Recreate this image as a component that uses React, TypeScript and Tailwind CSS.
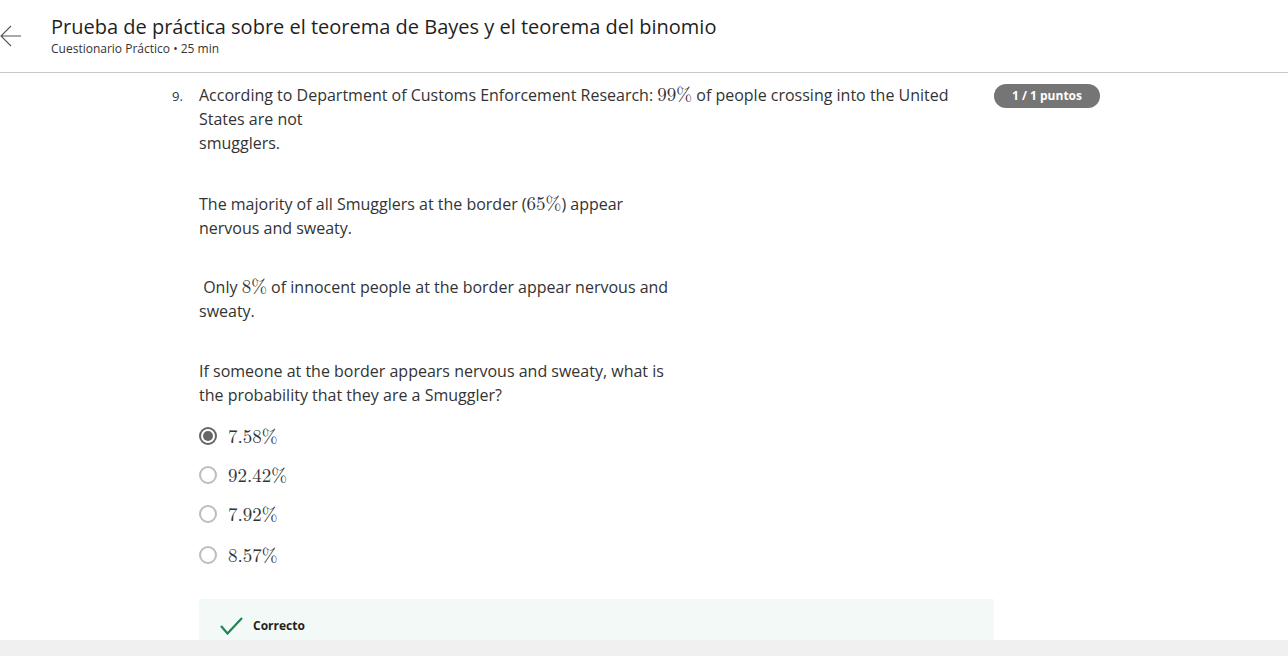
import React from 'react';

const sans = { fontFamily: '"Open Sans", "Noto Sans", Arial, sans-serif' };
const serif = { fontFamily: '"Latin Modern Roman", "Liberation Serif", "DejaVu Serif", serif' };

function M({ children }: { children: React.ReactNode }) {
  return (
    <span className="text-[19px] leading-[0]" style={serif}>
      {children}
    </span>
  );
}

function Radio({ checked, label }: { checked?: boolean; label: string }) {
  return (
    <div className="flex items-center h-[39px]">
      {checked ? (
        <span className="w-[18px] h-[18px] rounded-full border-2 border-[#666] flex items-center justify-center">
          <span className="w-[10px] h-[10px] rounded-full bg-[#666]" />
        </span>
      ) : (
        <span className="w-[18px] h-[18px] rounded-full border-2 border-[#bdbdbd]" />
      )}
      <span className="ml-[11px] text-[19px] leading-[24px] text-[#333]" style={serif}>
        {label}
      </span>
    </div>
  );
}

export default function App() {
  return (
    <div className="w-[1288px] h-[656px] bg-white overflow-hidden flex flex-col text-[#333]" style={sans}>
      <header className="h-[73px] shrink-0 border-b border-[#c8c8c8] flex">
        <div className="w-[51px] flex items-start pt-[24px]">
          <svg width="22" height="24" viewBox="0 0 22 24" fill="none" stroke="#555" strokeWidth="1.1">
            <path d="M21 12H1M11 2L1 12l10 10" />
          </svg>
        </div>
        <div className="pt-[14px]">
          <h1 className="text-[20px] leading-[26px] text-[#1f1f1f]">
            Prueba de práctica sobre el teorema de Bayes y el teorema del binomio
          </h1>
          <p className="text-[12px] leading-[16px] mt-[1px] text-[#333]">Cuestionario Práctico • 25 min</p>
        </div>
      </header>

      <main className="flex-1 flex pl-[172px] pt-[10px] min-h-0">
        <div className="w-[27px] pt-[1px] text-[13px] leading-[24px]">9.</div>
        <div className="flex-1 flex flex-col">
          <div className="flex items-start">
            <div className="w-[795px] text-[16px] leading-[24px] whitespace-nowrap">
              <p>
                According to Department of Customs Enforcement Research: <M>99%</M> of people crossing into the United
                <br />
                States are not
                <br />
                smugglers.
              </p>
              <p className="mt-[37px]">
                The majority of all Smugglers at the border (<M>65%</M>) appear
                <br />
                nervous and sweaty.
              </p>
              <p className="mt-[35px]">
                &nbsp;Only <M>8%</M> of innocent people at the border appear nervous and
                <br />
                sweaty.
              </p>
              <p className="mt-[36px]">
                If someone at the border appears nervous and sweaty, what is
                <br />
                the probability that they are a Smuggler?
              </p>
            </div>
            <span className="mt-[1px] h-[24px] w-[106px] rounded-full bg-[#757575] text-white text-[12px] font-bold flex items-center justify-center">
              1 / 1 puntos
            </span>
          </div>

          <div className="mt-[9px] flex flex-col">
            <Radio checked label="7.58%" />
            <Radio label="92.42%" />
            <Radio label="7.92%" />
            <div className="mt-[2px]">
              <Radio label="8.57%" />
            </div>
          </div>

          <div className="mt-[25px] w-[795px] flex-1 bg-[#f2f9f6] pl-[21px] pt-[18px]">
            <div className="flex items-center gap-[10px]">
              <svg width="23" height="18" viewBox="0 0 23 18" fill="none" stroke="#1f8354" strokeWidth="2.2">
                <path d="M1 9l6.5 7.5L22 1" />
              </svg>
              <span className="text-[12px] font-bold text-[#1f1f1f]">Correcto</span>
            </div>
          </div>
        </div>
      </main>

      <div className="h-[16px] shrink-0 bg-[#f0f0f0]" />
    </div>
  );
}
